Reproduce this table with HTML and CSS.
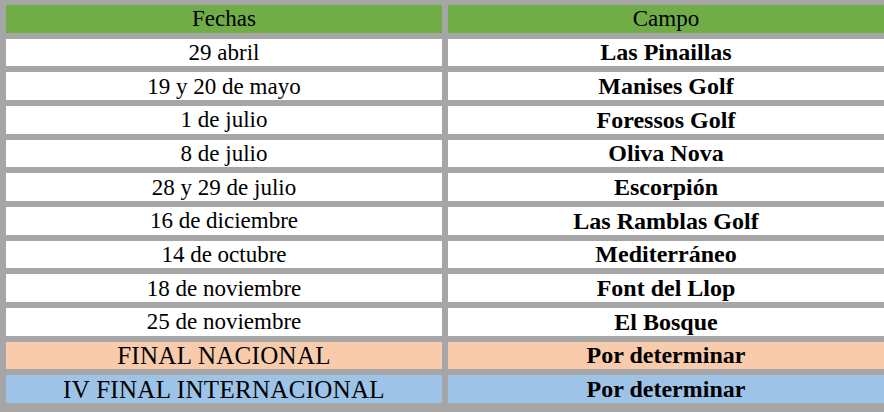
FILE: index.html
```html
<!DOCTYPE html>
<html lang="es">
<head>
<meta charset="utf-8">
<title>Calendario</title>
<link rel="stylesheet" href="styles.css">
</head>
<body>
<div class="table">
  <div class="cell head">Fechas</div><div class="cell head">Campo</div>
  <div class="cell date">29 abril</div><div class="cell place">Las Pinaillas</div>
  <div class="cell date">19 y 20 de mayo</div><div class="cell place">Manises Golf</div>
  <div class="cell date">1 de julio</div><div class="cell place">Foressos Golf</div>
  <div class="cell date">8 de julio</div><div class="cell place">Oliva Nova</div>
  <div class="cell date">28 y 29 de julio</div><div class="cell place">Escorpión</div>
  <div class="cell date">16 de diciembre</div><div class="cell place">Las Ramblas Golf</div>
  <div class="cell date">14 de octubre</div><div class="cell place">Mediterráneo</div>
  <div class="cell date">18 de noviembre</div><div class="cell place">Font del Llop</div>
  <div class="cell date">25 de noviembre</div><div class="cell place">El Bosque</div>
  <div class="cell date caps nacional">FINAL NACIONAL</div><div class="cell place nacional">Por determinar</div>
  <div class="cell date caps inter">IV FINAL INTERNACIONAL</div><div class="cell place inter">Por determinar</div>
</div>
</body>
</html>
```
FILE: styles.css
```css
html, body {
  margin: 0;
  padding: 0;
  background: #a6a6a6;
  overflow: hidden;
}
body {
  width: 884px;
  height: 412px;
}
.table {
  display: grid;
  grid-template-columns: 436px 436px;
  grid-template-rows: repeat(12, 27.67px);
  column-gap: 6px;
  row-gap: 6px;
  padding: 5px 0 0 6px;
  font-family: "Liberation Serif", serif;
  color: #000;
}
.cell {
  display: flex;
  align-items: center;
  justify-content: center;
  background: #fff;
  white-space: nowrap;
  line-height: 1;
}
.head {
  background: #70ad47;
  font-size: 23px;
}
.date {
  font-size: 23px;
}
.caps {
  font-size: 25px;
  letter-spacing: 0.3px;
}
.place {
  font-size: 24px;
  font-weight: bold;
}
.nacional {
  background: #f8cbad;
}
.inter {
  background: #9dc3e6;
}
```
